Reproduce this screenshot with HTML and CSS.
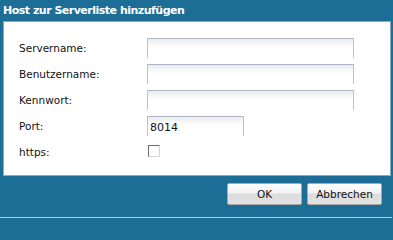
FILE: index.html
```html
<!DOCTYPE html>
<html lang="de">
<head>
<meta charset="utf-8">
<title>Host zur Serverliste hinzufügen</title>
<link rel="stylesheet" href="styles.css">
</head>
<body>
<div class="dialog">
  <div class="titlebar">Host zur Serverliste hinzufügen</div>
  <div class="panel">
    <div class="form">
      <label class="label">Servername:</label>
      <div class="field"><input class="input wide" type="text"></div>
      <label class="label">Benutzername:</label>
      <div class="field"><input class="input wide" type="text"></div>
      <label class="label">Kennwort:</label>
      <div class="field"><input class="input wide" type="password"></div>
      <label class="label">Port:</label>
      <div class="field"><input class="input narrow" type="text" value="8014"></div>
      <label class="label">https:</label>
      <div class="field"><span class="check"></span></div>
    </div>
  </div>
  <div class="footer">
    <button class="btn">OK</button>
    <button class="btn">Abbrechen</button>
  </div>
  <div class="bottomline"></div>
</div>
</body>
</html>
```
FILE: styles.css
```css
html, body {
  margin: 0;
  padding: 0;
}
body {
  background: #1d6e96;
  width: 393px;
  height: 220px;
  overflow: hidden;
  font-family: "DejaVu Sans", Verdana, sans-serif;
}
.dialog {
  display: flex;
  flex-direction: column;
}
.titlebar {
  height: 21px;
  line-height: 21px;
  padding-left: 3px;
  color: #ffffff;
  font-weight: bold;
  font-size: 11px;
  letter-spacing: -0.5px;
}
.panel {
  margin-left: 3px;
  margin-right: 2px;
  height: 153px;
  background: #ffffff;
  border: 1px solid #86abcf;
  box-sizing: content-box;
}
.form {
  display: grid;
  grid-template-columns: 128px 1fr;
  grid-auto-rows: 20px;
  row-gap: 6px;
  padding: 16px 0 0 15px;
}
.label {
  font-size: 10.5px;
  line-height: 20px;
  color: #111111;
}
.field {
  display: flex;
  align-items: flex-start;
}
.input {
  box-sizing: border-box;
  height: 20px;
  margin: 0;
  padding: 2px 3px 0 2px;
  border: 1px solid #c0c0c8;
  border-top-color: #b0b6c8;
  border-bottom: 0;
  background: linear-gradient(to bottom, #e9eded 0px, #f7f8f8 5px, #ffffff 9px);
  font-family: "DejaVu Sans", Verdana, sans-serif;
  font-size: 11px;
  color: #101010;
  outline: none;
}
.wide {
  width: 207px;
}
.narrow {
  width: 97px;
}
.check {
  display: block;
  width: 12px;
  height: 12px;
  box-sizing: border-box;
  margin: 3px 0 0 1px;
  border: 1px solid #d4d4d4;
  border-top-color: #6c6c6c;
  border-left-color: #6c6c6c;
  background: #ffffff;
}
.footer {
  height: 41px;
  display: flex;
  justify-content: flex-end;
  align-items: flex-start;
  gap: 5px;
  padding: 7px 11px 0 0;
  box-sizing: border-box;
}
.btn {
  width: 75px;
  height: 22px;
  margin: 0;
  padding: 0;
  border: 1px solid #a9a9a9;
  border-radius: 2px;
  background: linear-gradient(to bottom, #ffffff 0%, #f3f3f3 45%, #dddddd 50%, #e1e1e1 100%);
  font-family: "DejaVu Sans", Verdana, sans-serif;
  font-size: 10.5px;
  color: #111111;
}
.bottomline {
  height: 1px;
  margin-right: 1px;
  background: #b9d0e0;
}
```
